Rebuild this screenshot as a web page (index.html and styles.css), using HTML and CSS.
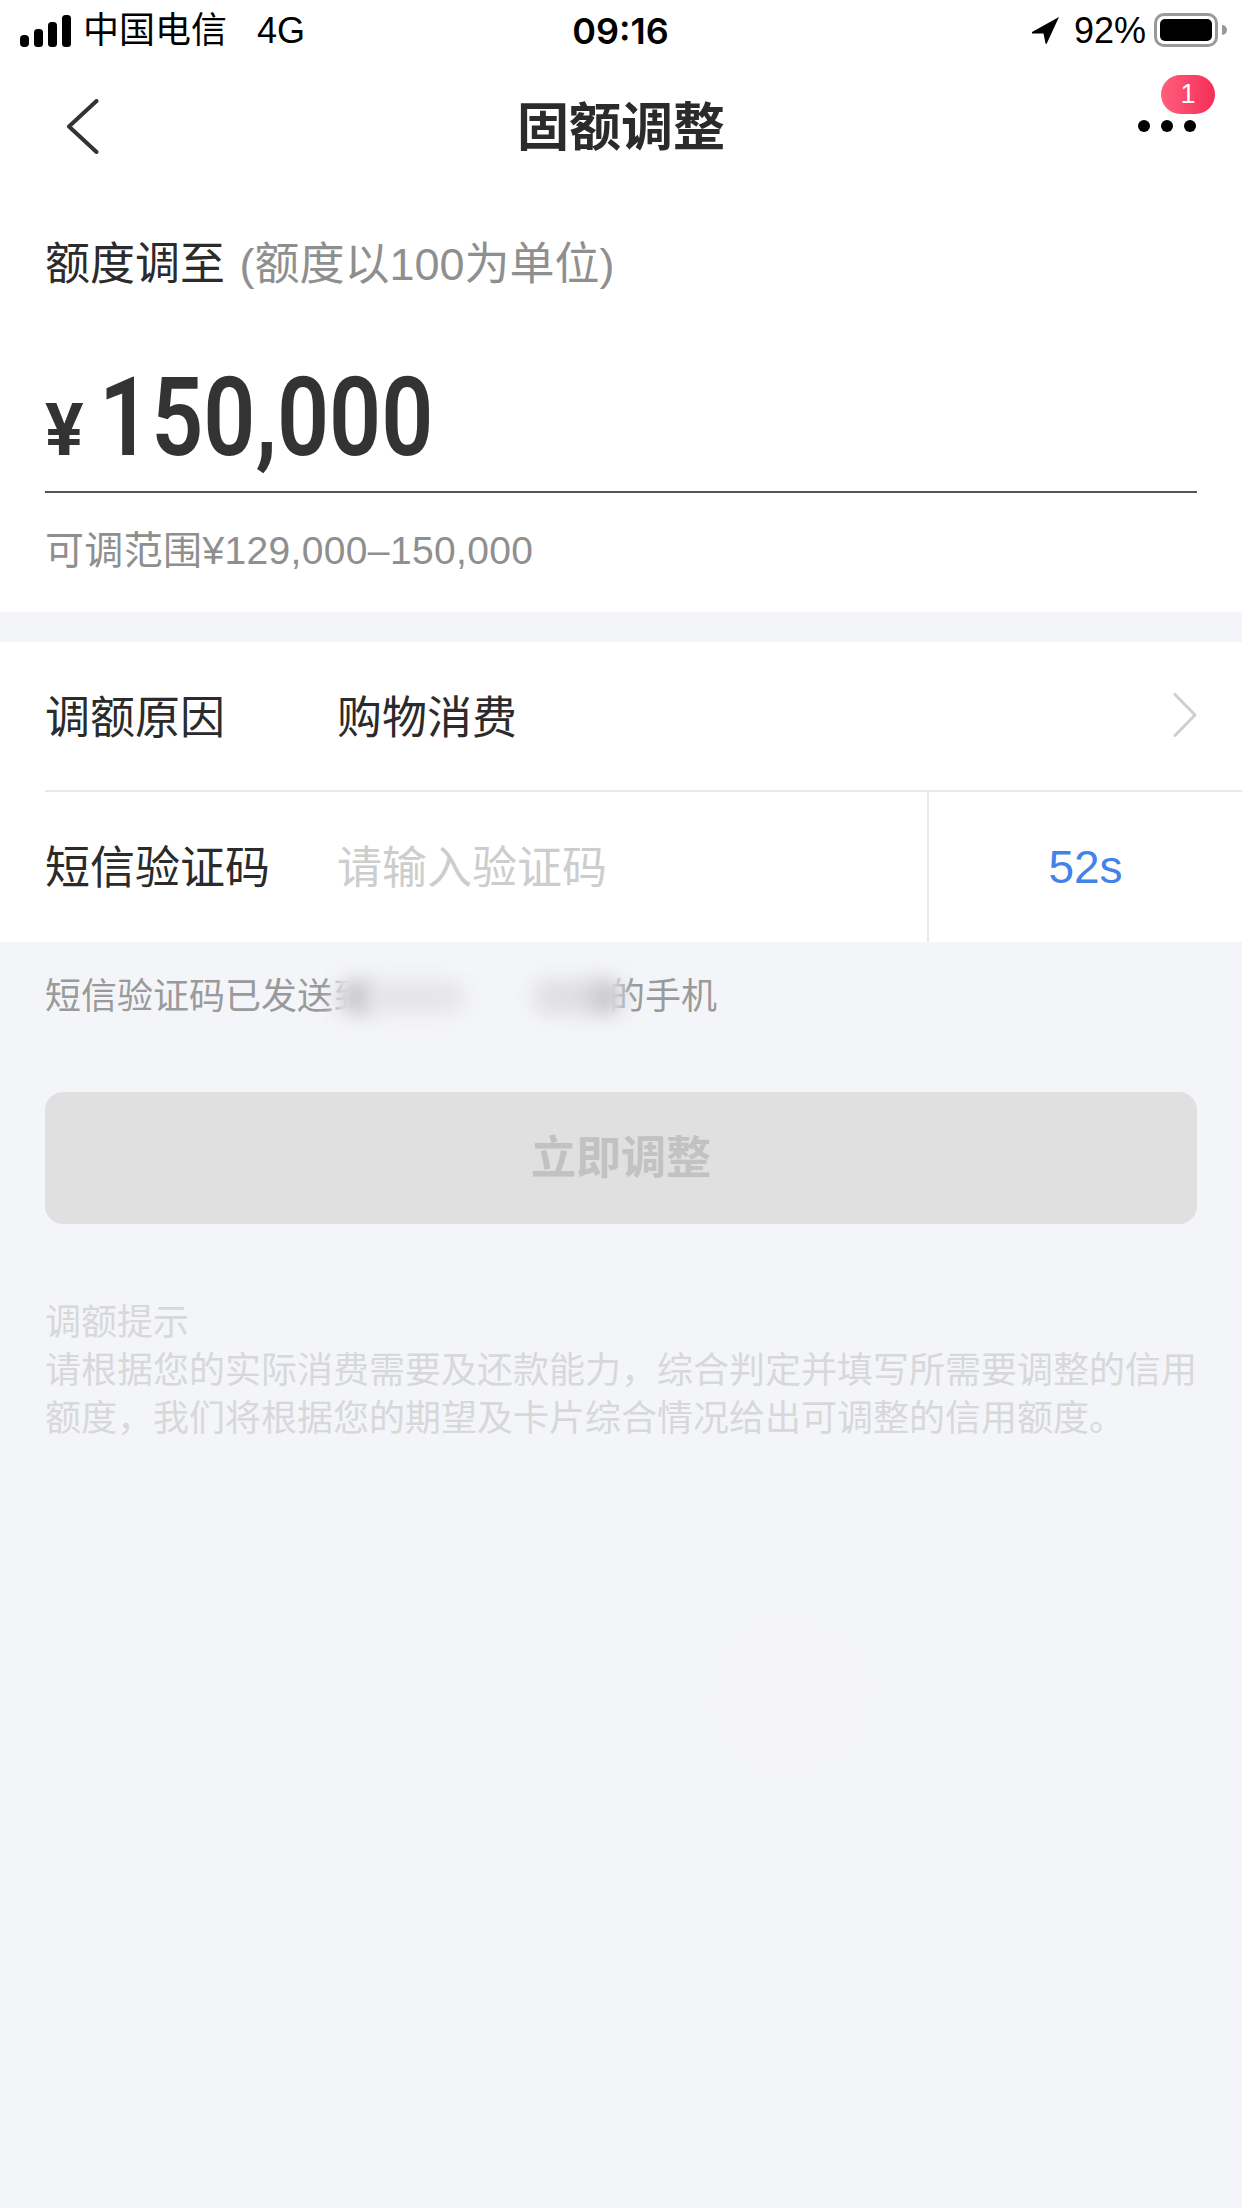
FILE: index.html
```html
<!DOCTYPE html>
<html lang="zh-CN">
<head>
<meta charset="utf-8">
<title>固额调整</title>
<link rel="stylesheet" href="styles.css">
</head>
<body>
<div class="page">
  <header class="top">
    <div class="status">
      <div class="status-left">
        <svg class="signal" width="52" height="32" viewBox="0 0 52 32"><rect x="0" y="20" width="9" height="12" rx="4"/><rect x="14" y="14" width="9" height="18" rx="3.5"/><rect x="28" y="7" width="9" height="25" rx="3.5"/><rect x="42" y="0" width="9" height="32" rx="3.5"/></svg>
        <span class="carrier">中国电信</span>
        <span class="net">4G</span>
      </div>
      <div class="clock">09:16</div>
      <div class="status-right">
        <svg class="arrow" width="27" height="27" viewBox="0 0 27 27"><path d="M27 0 L0 15 Q-1 16.500 1 16.500 L11.500 16.500 L13.500 26.500 Q14 27.500 15 26 Z"/></svg>
        <span class="pct">92%</span>
        <div class="battery"><div class="cell"></div></div>
        <div class="nub"></div>
      </div>
    </div>
    <nav class="nav">
      <svg class="back" width="33" height="55" viewBox="0 0 33 55"><path d="M30.500 2 L3 27.500 L30.500 53" fill="none" stroke="#333" stroke-width="4" stroke-linecap="round" stroke-linejoin="round"/></svg>
      <h1 class="title">固额调整</h1>
      <div class="more">
        <span class="badge">1</span>
        <svg class="dots" width="58" height="12" viewBox="0 0 58 12"><circle cx="6" cy="6" r="6"/><circle cx="29" cy="6" r="6"/><circle cx="52" cy="6" r="6"/></svg>
      </div>
    </nav>
  </header>

  <section class="amount-card">
    <div class="amount-label">额度调至 <span class="amount-note">(额度以100为单位)</span></div>
    <div class="amount-row">
      <span class="currency">¥</span>
      <span class="amount">150,000</span>
    </div>
    <div class="range">可调范围¥129,000–150,000</div>
  </section>

  <section class="form">
    <div class="row row-line">
      <span class="row-label">调额原因</span>
      <span class="row-value">购物消费</span>
      <svg class="chevron" width="24" height="44" viewBox="0 0 24 44"><path d="M2 1.500 L22 22 L2 42.500" fill="none" stroke="#cfcfcf" stroke-width="3" stroke-linecap="round" stroke-linejoin="round"/></svg>
    </div>
    <div class="row row-code">
      <span class="row-label">短信验证码</span>
      <span class="row-value placeholder">请输入验证码</span>
      <span class="timer">52s</span>
    </div>
  </section>

  <div class="hint">
    <span>短信验证码已发送到</span><span class="redacted"><i class="veil"></i><i class="blob blob-a"></i><i class="blob blob-m"></i><i class="blob blob-c"></i><i class="blob blob-b"></i></span><span>的手机</span>
  </div>

  <div class="action"><button class="submit" type="button">立即调整</button></div>

  <div class="tips">
    <div>调额提示</div>
    <div>请根据您的实际消费需要及还款能力，综合判定并填写所需要调整的信用额度，我们将根据您的期望及卡片综合情况给出可调整的信用额度。</div>
  </div>
  <div class="ghost"></div>
</div>
</body>
</html>
```

FILE: styles.css
```css
* { box-sizing: border-box; }
html, body { margin: 0; padding: 0; }
body {
  background: #f4f5f9;
  font-family: "Liberation Sans", "Noto Sans CJK SC", sans-serif;
  color: #2b2b2b;
}
.page {
  position: relative;
  width: 1242px;
  height: 2208px;
  overflow: hidden;
  background: #f4f5f9;
}
.top { background: #fff; }

/* status bar */
.status {
  height: 62px;
  display: grid;
  grid-template-columns: 1fr auto 1fr;
  align-items: center;
  padding: 0 15px 0 20px;
  color: #000;
  font-size: 36px;
}
.status-left { display: flex; align-items: center; }
.signal { fill: #000; margin-top: -1px; }
.carrier { margin-left: 11px; line-height: 62px; }
.net { margin-left: 30px; line-height: 62px; }
.clock {
  font-family: "Inter", "Liberation Sans", sans-serif;
  font-weight: 600;
  font-size: 36px;
  line-height: 62px;
  margin-left: -6px;
}
.status-right { display: flex; align-items: center; justify-content: flex-end; }
.arrow { fill: #000; margin-right: 15px; margin-top: -1px; }
.pct { margin-right: 8px; line-height: 62px; }
.battery {
  width: 64px;
  height: 34px;
  border: 3px solid #999;
  border-radius: 10px;
  padding: 3px;
  margin-top: -2px;
}
.cell { width: 100%; height: 100%; background: #000; border-radius: 5px; }
.nub {
  width: 5px;
  height: 10px;
  margin-left: 4px;
  margin-top: -2px;
  background: #999;
  border-radius: 0 5px 5px 0;
}

/* nav */
.nav {
  position: relative;
  height: 128px;
  padding-top: 3px;
  display: flex;
  align-items: center;
  justify-content: center;
}
.back { position: absolute; left: 66px; top: 37px; }
.title {
  margin: 0;
  font-size: 52px;
  font-weight: 700;
  line-height: 60px;
  color: #2b2b2b;
}
.more { position: absolute; left: 1138px; top: 13px; width: 80px; height: 60px; }
.badge {
  position: absolute;
  left: 23px;
  top: 0;
  width: 54px;
  height: 39px;
  border-radius: 20px;
  background: linear-gradient(90deg, #ff5f7c, #f62e58);
  color: #fff;
  font-size: 27px;
  line-height: 39px;
  text-align: center;
}
.dots { position: absolute; left: 0; top: 45px; fill: #000; }

/* amount */
.amount-card { background: #fff; padding: 45px 45px 0; height: 422px; }
.amount-label { font-size: 45px; line-height: 60px; color: #2b2b2b; }
.amount-note { color: #8f8f8f; margin-left: 2px; }
.amount-row {
  display: flex;
  align-items: baseline;
  height: 198px;
  padding-top: 68px;
  border-bottom: 2px solid #555;
  color: #333;
  font-family: "Roboto", "Liberation Sans", sans-serif;
}
.currency { font-size: 72px; line-height: 72px; font-weight: 700; width: 54px; }
.amount {
  display: inline-block;
  font-size: 110px;
  line-height: 110px;
  font-weight: 600;
  transform: scaleX(0.83);
  transform-origin: left center;
}
.range {
  font-size: 39px;
  line-height: 60px;
  margin-top: 28px;
  color: #8f8f8f;
  letter-spacing: 0.35px;
}

/* form */
.form { background: #fff; margin-top: 30px; padding-left: 45px; }
.row { display: flex; align-items: center; font-size: 45px; color: #2b2b2b; }
.row-line { height: 150px; border-bottom: 2px solid #e9e9e9; padding-right: 45px; padding-bottom: 3px; }
.row-code { height: 150px; }
.row-label { width: 292px; flex: none; }
.row-code .row-label, .row-code .row-value { padding-bottom: 5px; }
.row-value { flex: 1; }
.placeholder { color: #cdcdcd; }
.chevron { flex: none; }
.timer {
  flex: none;
  width: 315px;
  height: 100%;
  display: flex;
  align-items: center;
  justify-content: center;
  border-left: 2px solid #e9e9e9;
  color: #4382e8;
  font-size: 46px;
}

/* hint */
.hint {
  display: flex;
  padding: 30px 45px 0;
  font-size: 36px;
  line-height: 50px;
  color: #9a9a9a;
}
.redacted { position: relative; width: 240px; height: 50px; flex: none; }
.redacted i { position: absolute; display: block; }
.veil {
  left: -32px;
  right: -10px;
  top: -12px;
  bottom: -12px;
  background: #f4f5f9;
  filter: blur(8px);
}
.blob { background: #c6c6c9; filter: blur(10px); border-radius: 14px; }
.blob-a { left: -28px; width: 34px; top: 8px; height: 34px; }
.blob-m { left: 0; width: 95px; top: 10px; height: 30px; background: #e4e4e8; }
.blob-c { left: 165px; width: 70px; top: 8px; height: 34px; background: #dedee2; }
.blob-b { right: -12px; width: 30px; top: 8px; height: 34px; }

/* action */
.action { padding: 0 45px; margin-top: 70px; }
.submit {
  display: block;
  width: 100%;
  height: 132px;
  padding: 0 0 7px;
  border: 0;
  border-radius: 18px;
  background: #e0e0e0;
  color: #c2c2c2;
  font: 700 45px "Liberation Sans", "Noto Sans CJK SC", sans-serif;
}

/* tips */
.tips {
  padding: 75px 45px 0;
  font-size: 36px;
  line-height: 48px;
  color: #d8d8db;
}

.ghost {
  position: absolute;
  left: 725px;
  top: 1630px;
  width: 130px;
  height: 130px;
  border-radius: 50%;
  background: #f5f5f9;
  filter: blur(18px);
}
```
